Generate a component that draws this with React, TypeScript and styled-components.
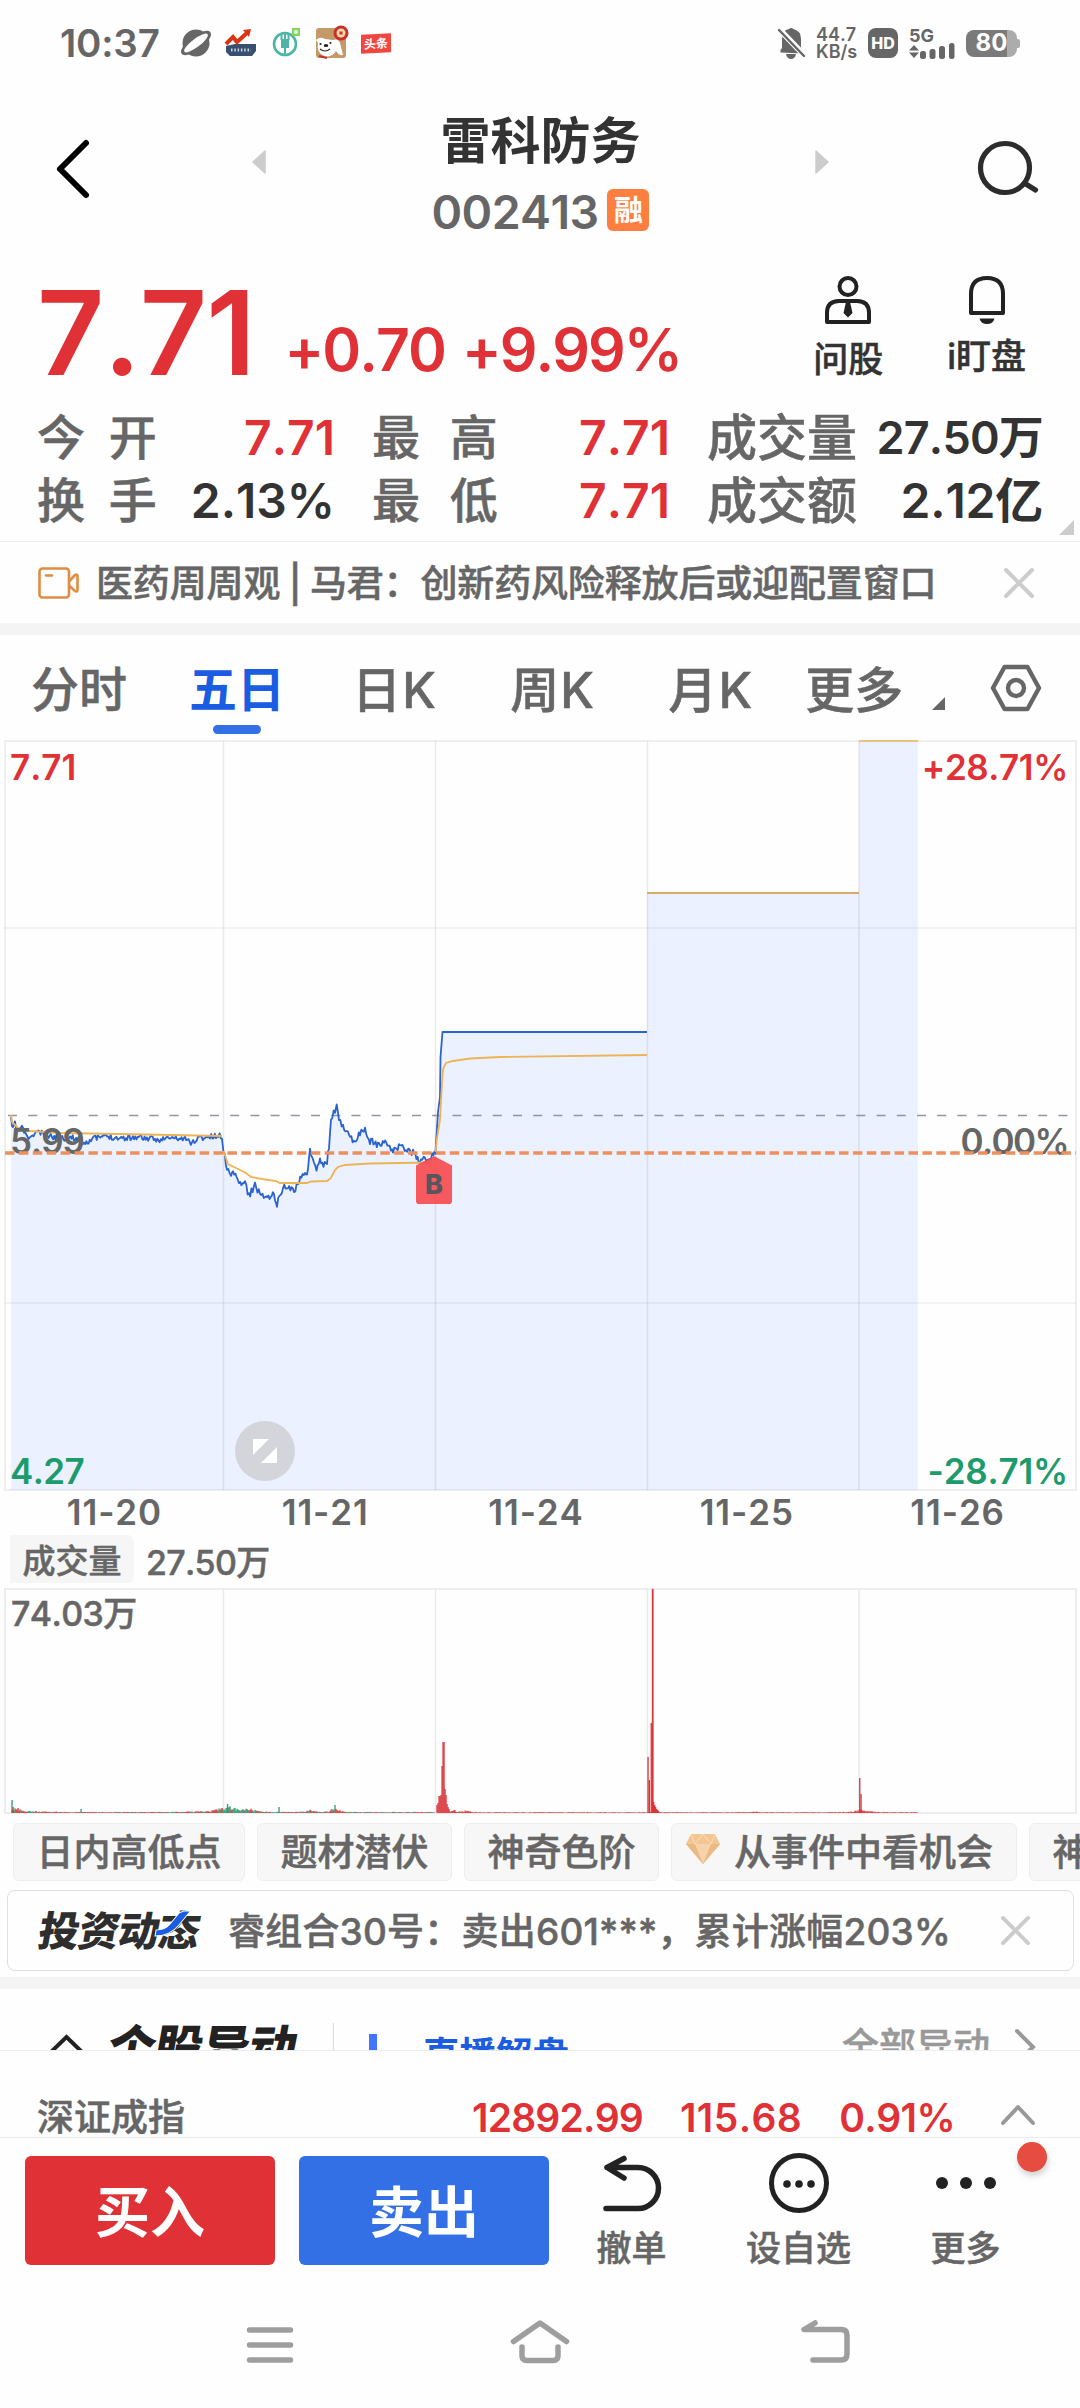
import React from "react";
import styled, { createGlobalStyle } from "styled-components";

const GlobalStyle = createGlobalStyle`
  * { box-sizing: border-box; }
  html, body { margin: 0; padding: 0; background: #fefefe; }
  body {
    font-family: "Inter", "Noto Sans CJK SC", sans-serif;
    font-kerning: none;
    color: #666;
  }
`;

const RED = "#e03136";
const GREEN = "#1d9b6c";
const BLUE = "#1b5de2";
const GREY = "#666666";
const INK = "#333333";

const Screen = styled.div`
  width: 1080px;
  height: 2408px;
  background: #fefefe;
  display: flex;
  flex-direction: column;
  overflow: hidden;
`;

const Svg = styled.svg`
  display: block;
  flex: none;
  overflow: visible;
`;

type LabelProps = { $size: number; $color?: string; $weight?: number; $spacing?: number; $shift?: number };
const Label = styled.span<LabelProps>`
  display: block;
  flex: none;
  white-space: nowrap;
  line-height: 1;
  font-size: ${(p) => p.$size}px;
  font-weight: ${(p) => p.$weight ?? 500};
  color: ${(p) => p.$color ?? GREY};
  -webkit-text-stroke: ${(p) => ((p.$weight ?? 500) === 500 ? 0.5 : 0)}px currentColor;
  letter-spacing: ${(p) => p.$spacing ?? 0}px;
  margin-top: ${(p) => (p.$shift ?? 0) * 2}px;
`;

/* ---------- status bar ---------- */

const StatusBar = styled.header`
  height: 86px;
  padding: 0 60px 0 60px;
  display: flex;
  align-items: center;
  justify-content: space-between;
`;
const StatusGroup = styled.div<{ $gap: number }>`
  display: flex;
  align-items: center;
  gap: ${(p) => p.$gap}px;
`;
const AppIcons = styled.div`
  display: flex;
  align-items: center;
  gap: 15px;
`;
const Speed = styled.div`
  display: flex;
  flex-direction: column;
  gap: 1px;
  width: 41px;
  font-size: 18px;
  line-height: 15.5px;
  font-weight: 600;
  white-space: nowrap;
`;
const Headline = styled.span`
  display: flex;
  align-items: center;
  justify-content: center;
  width: 30px;
  height: 19px;
  background: #ef4640;
  color: #fff;
  font-size: 12px;
  font-weight: 700;
  line-height: 1;
  transform: skewY(-3deg);
`;
const HdBadge = styled.div`
  width: 30px;
  height: 30px;
  border-radius: 8px;
  background: ${GREY};
  color: #fff;
  font-size: 16px;
  font-weight: 800;
  display: flex;
  align-items: center;
  justify-content: center;
`;
const Signal = styled.div`
  display: flex;
  flex-direction: column;
  width: 46px;
  height: 31px;
  font-size: 18px;
  font-weight: 700;
  line-height: 15px;
`;
const Battery = styled.div`
  width: 51px;
  height: 27px;
  border-radius: 8px;
  background: linear-gradient(90deg, #7a7a7a 80%, #acacac 80%);
  color: #fff;
  font-size: 24px;
  font-weight: 700;
  line-height: 1;
  display: flex;
  align-items: center;
  justify-content: center;
  margin-right: 3px;
  position: relative;
  &::after {
    content: "";
    position: absolute;
    right: -3px;
    top: 9px;
    width: 3px;
    height: 9px;
    border-radius: 0 2px 2px 0;
    background: #acacac;
  }
`;

function StatusRow() {
  return (
    <StatusBar>
      <StatusGroup $gap={21}>
        <Label $size={38.5} $weight={600} $spacing={-0.2}>10:37</Label>
        <AppIcons>
          <Svg width="30" height="28" viewBox="0 0 30 28">
            <circle cx="15" cy="14" r="13.5" fill={GREY} />
            <ellipse cx="15" cy="14" rx="18" ry="7" transform="rotate(-37 15 14)" fill={GREY} />
            <ellipse cx="15" cy="14" rx="14.5" ry="4.200" transform="rotate(-37 15 14)" fill="#fefefe" />
          </Svg>
          <Svg width="30" height="28" viewBox="0 0 30 28">
            <path d="M0 17 L9 15 L30 15 V22 L26 27 H4 L0 23Z" fill="#38506f" />
            <path d="M0 15 L7 8 L11 13 L22 3" fill="none" stroke="#db3413" strokeWidth="4" />
            <path d="M17 1 L25 0 L23 8Z" fill="#db3413" />
            <path d="M5 21 H25" stroke="#c9d2dd" strokeWidth="3" strokeDasharray="1.500 1.800" />
          </Svg>
          <Svg width="30" height="30" viewBox="0 0 30 30">
            <circle cx="14" cy="16" r="11" fill="none" stroke="#4cb5a5" strokeWidth="2.600" />
            <path d="M10.500 5 V12 M14 4 V12 M17.500 5 V12 M14 20 V27" fill="none" stroke="#4cb5a5" strokeWidth="2" />
            <rect x="10" y="11" width="8" height="9" fill="#4cb5a5" />
            <rect x="21" y="0" width="8" height="8" fill="#86cf61" />
            <circle cx="25" cy="4" r="2.300" fill="#d9f5c8" />
          </Svg>
          <Svg width="30" height="30" viewBox="0 0 30 30">
            <rect width="30" height="30" rx="3" fill="#c39a68" />
            <path d="M0 12 Q4 8 9 11 L17 12 Q22 10 24 15 L27 27 Q23 28 20 23 Q16 30 8 28 Q0 24 2 15Z" fill="#fff" />
            <circle cx="25" cy="5" r="7.500" fill="#c9302a" />
            <circle cx="25" cy="5" r="4.500" fill="#f3d9a8" />
            <rect x="23.500" y="3.500" width="3" height="3" fill="#c9302a" />
            <ellipse cx="10" cy="17.500" rx="2.300" ry="1.600" fill="#222" />
            <circle cx="4.500" cy="16" r="1.100" fill="#222" />
            <circle cx="14.500" cy="15" r="1.100" fill="#222" />
            <path d="M4 21 Q9 25 14 21" fill="none" stroke="#222" strokeWidth="1.200" />
            <path d="M3 28 L11 30" stroke="#c9302a" strokeWidth="2" />
          </Svg>
          <Headline>头条</Headline>
        </AppIcons>
      </StatusGroup>
      <StatusGroup $gap={11}>
        <Svg width="27" height="31" viewBox="0 0 27 31">
          <path d="M2.500 24.500 V22 L4 20 V11 Q4 2 11 1 Q13 -1 15.500 1 Q23 3 23 11 V20 L25 23 V25.500Z" fill={GREY} />
          <path d="M8 26 H18 Q17 31 13 31 Q9 31 8 26Z" fill={GREY} />
          <path d="M-1 -1 L28 29" stroke="#fefefe" strokeWidth="6" />
          <path d="M1 2 L26 28" stroke={GREY} strokeWidth="2.400" strokeLinecap="round" />
        </Svg>
        <Speed>
          <span>44.7</span>
          <span>KB/s</span>
        </Speed>
        <HdBadge>HD</HdBadge>
        <Signal>
          <span>5G</span>
          <Svg width="46" height="16" viewBox="0 0 46 16">
            <path d="M0 7.500 L5 2 L10 7.500Z M0 9.500 L5 15 L10 9.500Z" fill={GREY} />
            <g fill={GREY}>
              <rect x="11" y="8" width="6" height="8" rx="2.500" />
              <rect x="20.500" y="6" width="6" height="10" rx="2.500" />
              <rect x="30" y="3" width="6" height="13" rx="2.500" />
              <rect x="40" y="0" width="5.500" height="16" rx="2.500" />
            </g>
          </Svg>
        </Signal>
        <Battery>80</Battery>
      </StatusGroup>
    </StatusBar>
  );
}

/* ---------- title ---------- */

const TitleBar = styled.div`
  height: 164px;
  padding: 0 42px 0 57px;
  display: grid;
  grid-template-columns: 195px 1fr 209px;
  align-items: start;
`;
const TitleSide = styled.div<{ $end?: boolean }>`
  height: 120px;
  padding-top: 54px;
  display: flex;
  align-items: flex-start;
  justify-content: ${(p) => (p.$end ? "flex-end" : "flex-start")};
`;
const TitleMiddle = styled.div`
  display: flex;
  justify-content: space-between;
  align-items: flex-start;
`;
const TitleCentre = styled.div`
  padding-top: 30px;
  display: flex;
  flex-direction: column;
  align-items: center;
  gap: 23px;
`;
const CodeRow = styled.div`
  display: flex;
  align-items: center;
  gap: 9px;
`;
const MarginBadge = styled.span`
  width: 42px;
  height: 42px;
  border-radius: 6px;
  background: #ff7f41;
  color: #fff;
  font-size: 29px;
  font-weight: 700;
  line-height: 1;
  display: flex;
  align-items: center;
  justify-content: center;
  margin-top: -4px;
`;
const Pager = styled(Svg)`
  margin-top: 64px;
`;

function TitleRow() {
  return (
    <TitleBar>
      <TitleSide>
        <Svg width="32" height="58" viewBox="0 0 32 58">
          <path d="M29 3 L3 29 L29 55" fill="none" stroke="#000" strokeWidth="6" strokeLinecap="round" strokeLinejoin="round" />
        </Svg>
      </TitleSide>
      <TitleMiddle>
        <Pager width="14" height="24" viewBox="0 0 14 24">
          <path d="M13 1 V23 L1 12Z" fill="#ccc" stroke="#ccc" strokeWidth="1.500" strokeLinejoin="round" />
        </Pager>
        <TitleCentre>
          <Label $size={50} $color={INK} $weight={600}>雷科防务</Label>
          <CodeRow>
            <Label $size={46.5} $weight={600} $spacing={-0.6}>002413</Label>
            <MarginBadge>融</MarginBadge>
          </CodeRow>
        </TitleCentre>
        <Pager width="14" height="24" viewBox="0 0 14 24">
          <path d="M1 1 V23 L13 12Z" fill="#ccc" stroke="#ccc" strokeWidth="1.500" strokeLinejoin="round" />
        </Pager>
      </TitleMiddle>
      <TitleSide $end>
        <Svg width="60" height="56" viewBox="0 0 60 56">
          <circle cx="27" cy="28" r="24.500" fill="none" stroke="#2c2c2c" strokeWidth="5.200" />
          <path d="M47 43.500 L57.500 50" stroke="#2c2c2c" strokeWidth="5.200" strokeLinecap="round" />
        </Svg>
      </TitleSide>
    </TitleBar>
  );
}

/* ---------- quote ---------- */

const Quote = styled.section`
  height: 156px;
  padding: 0 54px 0 37px;
  display: flex;
  justify-content: space-between;
`;
const PriceRow = styled.div`
  display: flex;
  align-items: flex-start;
  padding-top: 24px;
`;
const Change = styled.div`
  display: flex;
  gap: 17px;
  margin: 46px 0 0 30px;
`;
const Actions = styled.div`
  display: flex;
  gap: 64px;
  padding-top: 26px;
`;
const Action = styled.div<{ $gap: number }>`
  display: flex;
  flex-direction: column;
  align-items: center;
  gap: ${(p) => p.$gap}px;
`;

function QuoteRow() {
  return (
    <Quote>
      <PriceRow>
        <Label $size={117} $color={RED} $weight={600} $spacing={-1}>7.71</Label>
        <Change>
          <Label $size={59} $color={RED} $weight={600} $spacing={-2}>+0.70</Label>
          <Label $size={59} $color={RED} $weight={600} $spacing={-2}>+9.99%</Label>
        </Change>
      </PriceRow>
      <Actions>
        <Action $gap={18}>
          <Svg width="46" height="48" viewBox="0 0 46 48">
            <circle cx="23" cy="10.500" r="8.500" fill="none" stroke="#222" strokeWidth="4" />
            <path d="M2 46 V37 Q2 25 14 25 H32 Q44 25 44 37 V46Z" fill="none" stroke="#222" strokeWidth="4" strokeLinejoin="round" />
            <path d="M21 26 H25 L27.500 37 L23 41.500 L18.500 37Z" fill="#222" />
          </Svg>
          <Label $size={35} $color={INK}>问股</Label>
        </Action>
        <Action $gap={15}>
          <Svg width="36" height="48" viewBox="0 0 36 48">
            <path d="M2 37 V18 Q2 2 18 2 Q34 2 34 18 V37Z" fill="none" stroke="#222" strokeWidth="4" strokeLinejoin="round" />
            <path d="M10.500 42.500 H25.500 Q24 48 18 48 Q12 48 10.500 42.500Z" fill="#222" />
          </Svg>
          <Label $size={35} $color={INK}>i盯盘</Label>
        </Action>
      </Actions>
    </Quote>
  );
}

/* ---------- figures ---------- */

const Figures = styled.section`
  height: 135px;
  padding: 0 37px 9px 37px;
  display: grid;
  grid-template-columns: 298px 298px 1fr;
  column-gap: 37px;
  grid-auto-rows: 63px;
  position: relative;
`;
const Figure = styled.div`
  display: flex;
  align-items: center;
  justify-content: space-between;
  height: 63px;
`;
const Corner = styled(Svg)`
  position: absolute;
  right: 6px;
  bottom: 6px;
`;

type FigureData = { name: string; value: string; color: string; size: number; spacing: number; gap: number };
const FIGURES: FigureData[] = [
  { name: "今 开", value: "7.71", color: RED, size: 48, spacing: 0, gap: 11 },
  { name: "最 高", value: "7.71", color: RED, size: 48, spacing: 0, gap: 17 },
  { name: "成交量", value: "27.50万", color: INK, size: 45, spacing: -0.8, gap: 0 },
  { name: "换 手", value: "2.13%", color: INK, size: 48, spacing: 0, gap: 11 },
  { name: "最 低", value: "7.71", color: RED, size: 48, spacing: 0, gap: 17 },
  { name: "成交额", value: "2.12亿", color: INK, size: 48, spacing: -0.2, gap: 0 },
];
const FigureName = styled(Label)<{ $gap: number }>`
  word-spacing: ${(p) => p.$gap}px;
`;

function FigureGrid() {
  return (
    <Figures>
      {FIGURES.map((f, i) => (
        <Figure key={i}>
          <FigureName $size={f.gap ? 48 : 50} $gap={f.gap}>{f.name}</FigureName>
          <Label $size={f.size} $color={f.color} $weight={600} $spacing={f.spacing}>{f.value}</Label>
        </Figure>
      ))}
      <Corner width="15" height="15" viewBox="0 0 15 15">
        <path d="M15 0 V15 H0Z" fill="#ccc" />
      </Corner>
    </Figures>
  );
}

/* ---------- banner ---------- */

const Banner = styled.div`
  height: 82px;
  border-top: 1px solid #ececec;
  padding: 0 46px 0 38px;
  display: flex;
  align-items: center;
`;
const BannerText = styled(Label)`
  margin-left: 17px;
  flex: 1;
  word-spacing: -1.2px;
`;
const Band = styled.div`
  height: 12px;
  flex: none;
  background: #f4f4f4;
`;

function Cross({ size }: { size: number }) {
  return (
    <Svg width={size} height={size} viewBox="0 0 30 30">
      <path d="M2 2 L28 28 M28 2 L2 28" stroke="#ccc" strokeWidth="4" strokeLinecap="round" />
    </Svg>
  );
}

/* ---------- tabs ---------- */

const Tabs = styled.nav`
  height: 105px;
  padding: 0 39px 0 31px;
  display: flex;
`;
const Tab = styled.div<{ $left: number; $active?: boolean }>`
  margin-left: ${(p) => p.$left}px;
  padding-top: 31px;
  display: flex;
  flex-direction: column;
  align-items: center;
  &::after {
    content: "";
    display: ${(p) => (p.$active ? "block" : "none")};
    width: 48px;
    height: 9px;
    margin-top: 11px;
    border-radius: 5px;
    background: #3370e6;
  }
`;
const TabMark = styled(Svg)`
  margin: 62px 0 0 29px;
`;
const Hexagon = styled(Svg)`
  margin: 30px 0 0 auto;
`;

function TabRow() {
  return (
    <Tabs>
      <Tab $left={0}><Label $size={48}>分时</Label></Tab>
      <Tab $left={62} $active><Label $size={48} $color={BLUE} $weight={700}>五日</Label></Tab>
      <Tab $left={67}><Label $size={49} $spacing={1.2}>日K</Label></Tab>
      <Tab $left={73}><Label $size={49} $spacing={1.2}>周K</Label></Tab>
      <Tab $left={73}><Label $size={49} $spacing={1.2}>月K</Label></Tab>
      <Tab $left={52}><Label $size={49}>更多</Label></Tab>
      <TabMark width="13" height="13" viewBox="0 0 13 13">
        <path d="M13 0 V13 H0Z" fill={GREY} />
      </TabMark>
      <Hexagon width="50" height="46" viewBox="0 0 50 46">
        <path d="M13.500 2 H36.500 L48 23 L36.500 44 H13.500 L2 23Z" fill="none" stroke={GREY} strokeWidth="4.400" strokeLinejoin="round" />
        <circle cx="25" cy="23" r="8" fill="none" stroke={GREY} strokeWidth="4.400" />
      </Hexagon>
    </Tabs>
  );
}

/* ---------- charts ---------- */

const DAY_LINES = [223.5, 435.5, 647.5, 859];

type Pt = [number, number];

function random(seed: number) {
  let s = seed;
  return () => {
    s = (s * 16807) % 2147483647;
    return s / 2147483647;
  };
}

function jagged(points: Pt[], noise: number, seed: number): Pt[] {
  const rnd = random(seed);
  const out: Pt[] = [points[0]];
  for (let i = 1; i < points.length; i++) {
    const [x0, y0] = points[i - 1];
    const [x1, y1] = points[i];
    const steps = Math.max(1, Math.round((x1 - x0) / 1.2));
    for (let k = 1; k <= steps; k++) {
      const t = k / steps;
      out.push([x0 + (x1 - x0) * t, y0 + (y1 - y0) * t + (rnd() - 0.5) * noise]);
    }
  }
  return out;
}
const toPath = (pts: Pt[]) => "M" + pts.map(([x, y]) => x.toFixed(1) + " " + y.toFixed(1)).join(" L");

const DAY1 = jagged(
  [[11, 377], [12, 389], [15, 384], [18, 390], [22, 387], [25, 394], [31, 399], [36, 391], [45, 395], [60, 398], [75, 398], [83, 403], [92, 399], [106, 396], [120, 398], [140, 397], [155, 400], [170, 398], [185, 399], [192, 403], [198, 398], [222, 396]],
  6, 11);
const DAY2 = jagged(
  [[223.5, 412], [227, 427], [231, 437], [233, 430], [239, 446], [245, 443], [249, 456], [255, 444], [260, 455], [265, 458], [274, 454], [277, 464], [283, 447], [288, 445], [294, 453], [299, 440], [305, 432], [307, 437], [310, 412], [314, 423], [316.5, 431], [320, 422], [327, 425], [329, 405], [331, 378], [335, 370], [336.7, 367], [339, 377], [343, 388], [349, 395], [355, 402], [360, 393], [365, 390], [370, 401], [379, 405], [384, 401], [392, 412], [400, 406], [406, 409], [413, 413], [421, 422], [425, 418], [431, 418], [435.5, 411]],
  7, 29);
const DAY3: Pt[] = [[435.5, 411], [438, 372], [440, 357], [440.5, 317], [442.5, 292], [647, 292]];
const PRICE = [...DAY1, ...DAY2, ...DAY3];

const AVERAGES = [
  "M11 375 L12 382 L19 389 L30 391 L60 393 L120 394 L222 396",
  "M223.500 411 L228 424 L236 428 L246 433 L251 437 L262 439 L276 441 L280 443 L307 443 L311 441.500 L327 441 L331 438 L335 430 L338 427 L345 425 L370 423.500 L430 422.500",
  "M435.500 412 L437 398 L440 380 L441.500 352 L443 329 L446 323 L453 321 L470 318.500 L500 317 L647 315",
];

const ChartBox = styled.section`
  position: relative;
  height: 752px;
`;
const ChartLabels = styled.div`
  position: absolute;
  inset: 10px 12px 3px 10px;
  display: grid;
  grid-template-columns: auto auto;
  justify-content: space-between;
  align-content: space-between;
`;
const EndLabel = styled(Label)`
  justify-self: end;
`;
const CostLine = styled(Svg)`
  position: absolute;
  left: 0;
  top: 411px;
`;
const BuyMark = styled.div`
  position: absolute;
  left: 416px;
  top: 416px;
  width: 36px;
  height: 48px;
  padding-top: 9px;
  clip-path: polygon(50% 0, 100% 20%, 100% 96%, 96% 100%, 4% 100%, 0 96%, 0 20%);
  background: rgba(247, 72, 76, 0.9);
  display: flex;
  align-items: center;
  justify-content: center;
  font-size: 27px;
  font-weight: 800;
  color: #565660;
`;
const Expand = styled(Svg)`
  position: absolute;
  left: 235px;
  top: 681px;
`;

function PriceChart() {
  return (
    <ChartBox>
      <Svg width="1080" height="752" viewBox="0 0 1080 752">
        <path d={toPath(PRICE) + " V153 H859 V2 H918 V750 H11Z"} fill="#ebf1ff" />
        <g stroke="#000" strokeOpacity="0.08" strokeWidth="1.500">
          <path d="M5 188 H1076 M5 563 H1076" strokeOpacity="0.06" />
          {DAY_LINES.map((x) => <path key={x} d={`M${x} 1 V750`} />)}
        </g>
        <path d="M8 375.500 H1076" stroke="#9495a0" strokeWidth="1.300" strokeDasharray="9 11.200" />
        <path d={toPath(PRICE)} fill="none" stroke="#2a63cf" strokeWidth="1.800" strokeLinejoin="round" />
        {AVERAGES.map((d) => <path key={d} d={d} fill="none" stroke="#edb354" strokeWidth="1.800" />)}
        <path d="M647 153 H859" stroke="#d8ab67" strokeWidth="2" />
        <rect x="5" y="1" width="1071" height="749" fill="none" stroke="#000" strokeOpacity="0.06" strokeWidth="2" />
        <path d="M859 1 H918" stroke="#e8c27e" strokeWidth="2" />
      </Svg>
      <ChartLabels>
        <Label $size={35} $color={RED} $weight={600}>7.71</Label>
        <EndLabel $size={35} $color={RED} $weight={600} $spacing={-0.4}>+28.71%</EndLabel>
        <Label $size={35} $weight={600} $shift={22} $spacing={-1}>5.99</Label>
        <EndLabel $size={35} $weight={600} $shift={22} $spacing={-1.6}>0.00%</EndLabel>
        <Label $size={35} $color={GREEN} $weight={600} $spacing={-0.6}>4.27</Label>
        <EndLabel $size={35} $color={GREEN} $weight={600} $spacing={-0.2}>-28.71%</EndLabel>
      </ChartLabels>
      <CostLine width="1080" height="4" viewBox="0 0 1080 4">
        <path d="M5 2 H1076" stroke="#ee8f5e" strokeWidth="3.400" strokeDasharray="9.500 4.400" />
      </CostLine>
      <BuyMark>B</BuyMark>
      <Expand width="60" height="60" viewBox="0 0 60 60">
        <circle cx="30" cy="30" r="30" fill="#d4d5da" />
        <path d="M18 18 H34 L18 34Z M42 26 V42 H26Z" fill="#fff" />
      </Expand>
    </ChartBox>
  );
}

const Dates = styled.div`
  height: 41px;
  padding: 0 17px 0 9px;
  display: grid;
  grid-template-columns: repeat(5, 1fr);
  justify-items: center;
  align-items: center;
`;
const VolumeHead = styled.div`
  height: 55px;
  padding: 2px 0 6px 10px;
  display: flex;
  align-items: center;
  gap: 12px;
`;
const VolumeTag = styled.div`
  width: 124px;
  height: 48px;
  border-radius: 0 6px 6px 0;
  background: #f6f6f6;
  display: flex;
  align-items: center;
  justify-content: center;
`;
const VolumeBox = styled.section`
  position: relative;
  height: 226px;
`;
const VolumeMax = styled.div`
  position: absolute;
  left: 11px;
  top: 9px;
`;

type Bar = { x: number; h: number; up: boolean };

function smallBars(): Bar[] {
  const rnd = random(77);
  const bars: Bar[] = [];
  const bump = (x: number, at: number, h: number, w: number) => h * Math.exp(-Math.abs(x - at) / w);
  for (let x = 12; x < 435; x += 1) {
    const level = 1 + bump(x, 12, 6, 12) + bump(x, 228, 6, 14) + bump(x, 250, 2.5, 6) + bump(x, 310, 2, 5) + bump(x, 335, 8, 3);
    bars.push({ x, h: level * (0.4 + rnd() * 0.7), up: rnd() > (x > 223 && x < 245 ? 0.7 : 0.35) });
  }
  for (let x = 450; x < 918; x += 1) {
    const level = 0.8 + bump(x, 450, 3, 10) + bump(x, 467, 3, 2) + bump(x, 754, 2, 2) + bump(x, 861, 3, 8);
    bars.push({ x, h: level * (0.3 + rnd() * 0.8), up: true });
  }
  return bars;
}
const SPIKES: Bar[] = [
  { x: 12, h: 13, up: false }, { x: 13, h: 6, up: true }, { x: 227.5, h: 9, up: false }, { x: 279, h: 6, up: false }, { x: 81, h: 4, up: false },
  { x: 437, h: 8, up: true }, { x: 438, h: 10, up: true }, { x: 439, h: 17, up: true }, { x: 440, h: 17, up: true }, { x: 441, h: 18, up: true },
  { x: 442, h: 47, up: true }, { x: 443, h: 71, up: true }, { x: 444, h: 71, up: true }, { x: 445, h: 24, up: true }, { x: 446, h: 18, up: true },
  { x: 447, h: 9, up: true }, { x: 448, h: 6, up: true }, { x: 449, h: 4, up: true },
  { x: 648, h: 56, up: true }, { x: 649.3, h: 33, up: true }, { x: 651.2, h: 90, up: true }, { x: 652.4, h: 224, up: true }, { x: 653.6, h: 11, up: true },
  { x: 654.6, h: 8, up: true }, { x: 655.6, h: 6, up: true }, { x: 656.6, h: 4, up: true }, { x: 657.6, h: 3, up: true }, { x: 658.6, h: 2, up: true },
  { x: 859.7, h: 35, up: true }, { x: 861, h: 19, up: true },
];
const BARS = [...smallBars(), ...SPIKES];

function VolumeChart() {
  return (
    <VolumeBox>
      <Svg width="1080" height="226" viewBox="0 0 1080 226">
        <rect x="5" y="1" width="1071" height="224" fill="none" stroke="#ededee" strokeWidth="2" />
        {DAY_LINES.map((x) => <path key={x} d={`M${x} 1 V225`} stroke="#e9e9ea" strokeWidth="1.500" />)}
        {BARS.map((b, i) => (
          <rect key={i} x={b.x - 0.6} y={225 - b.h} width={b.h > 200 ? 1.8 : 1.3} height={b.h} fill={b.up ? "#d93438" : "#2b9c73"} />
        ))}
      </Svg>
      <VolumeMax><Label $size={34} $spacing={-0.6}>74.03万</Label></VolumeMax>
    </VolumeBox>
  );
}

/* ---------- chips and news ---------- */

const Chips = styled.div`
  height: 76px;
  padding: 9px 0 0 13px;
  display: flex;
  gap: 12px;
  overflow: hidden;
`;
const Chip = styled.div<{ $width: number; $icon?: boolean }>`
  flex: none;
  width: ${(p) => p.$width}px;
  height: 58px;
  border: 1px solid #eeeeee;
  border-radius: 6px;
  background: #f7f7f7;
  display: flex;
  align-items: center;
  justify-content: ${(p) => (p.$icon ? "flex-start" : "center")};
  padding-left: ${(p) => (p.$icon ? 14 : 0)}px;
  gap: 14px;
`;
const Gem = styled(Svg)`
  margin-top: -6px;
`;
const Card = styled.div`
  margin: 0 6px 6px 7px;
  height: 81px;
  flex: none;
  border: 1px solid #dfdfdf;
  border-radius: 8px;
  padding: 0 43px 0 31px;
  display: flex;
  align-items: center;
`;
const NewsLogo = styled.div`
  position: relative;
  width: 162px;
  padding-top: 2px;
  font-size: 41px;
  font-weight: 900;
  line-height: 1;
  color: #2e2e2e;
  white-space: nowrap;
  letter-spacing: -1px;
  transform: skewX(-10deg);
`;
const Swoosh = styled(Svg)`
  position: absolute;
  left: 117px;
  top: 2px;
`;
const NewsText = styled(Label)`
  margin-left: 27px;
  flex: 1;
`;

/* ---------- clipped section ---------- */

const Section = styled.section`
  height: 61px;
  flex: none;
  padding: 34px 45px 0 50px;
  overflow: hidden;
  display: flex;
  align-items: flex-start;
`;
const Fold = styled(Svg)`
  margin-top: 12px;
`;
const SectionTitle = styled.div`
  margin: 1px 0 0 25px;
  width: 192px;
  font-size: 48px;
  font-weight: 900;
  line-height: 1;
  letter-spacing: -1px;
  color: #222;
  white-space: nowrap;
  transform: skewX(-10deg);
`;
const Rule = styled.div`
  width: 1px;
  height: 60px;
  margin-left: 33px;
  background: #ddd;
`;
const BlueBar = styled.div`
  width: 8px;
  height: 40px;
  margin: 11px 0 0 35px;
  background: #3f76fb;
`;
const LiveLink = styled(Label)`
  margin: 14px 0 0 46px;
`;
const AllLink = styled(Label)`
  margin: 5px 25px 0 auto;
`;
const Next = styled(Svg)`
  margin-top: 6px;
`;

/* ---------- index strip ---------- */

const IndexStrip = styled.div`
  height: 87px;
  flex: none;
  padding: 48px 45px 0 37px;
  border-top: 1px solid #ececec;
  display: flex;
  align-items: flex-start;
`;
const IndexValues = styled.div`
  margin: -1px 0 0 auto;
  display: flex;
  gap: 37px;
`;
const Up = styled(Svg)`
  margin: 6px 0 0 46px;
`;

/* ---------- trade bar ---------- */

const TradeBar = styled.div`
  height: 133px;
  flex: none;
  padding: 18px 0 0 25px;
  border-top: 1px solid #ececec;
  display: flex;
  align-items: flex-start;
  position: relative;
`;
const Trade = styled.button<{ $bg: string }>`
  width: 250px;
  height: 109px;
  margin: 0 24px 0 0;
  border: 0;
  border-radius: 6px;
  background: ${(p) => p.$bg};
  color: #fff;
  font-family: inherit;
  font-size: 55px;
  font-weight: 700;
  line-height: 1;
  padding: 3px 0 0;
`;
const Tools = styled.div`
  display: flex;
  margin: -3px 0 0 -25px;
`;
const Tool = styled.div`
  width: 167px;
  display: flex;
  flex-direction: column;
  align-items: center;
  gap: 18px;
`;
const Dot = styled.div`
  position: absolute;
  left: 1017px;
  top: 4px;
  width: 30px;
  height: 30px;
  border-radius: 50%;
  background: #e64d40;
  box-shadow: 1px 4px 6px rgba(0, 0, 0, 0.18);
`;

const SystemNav = styled.footer`
  flex: 1;
  padding: 50px 0 0 247px;
  display: grid;
  grid-template-columns: 264px 290px auto;
  justify-content: start;
  align-items: start;
`;

export default function App() {
  return (
    <>
      <GlobalStyle />
      <Screen>
        <StatusRow />
        <TitleRow />
        <QuoteRow />
        <FigureGrid />
        <Banner>
          <Svg width="41" height="32" viewBox="0 0 41 32">
            <rect x="1.500" y="1.500" width="29.500" height="29" rx="3" fill="none" stroke="#df8d42" strokeWidth="2.600" />
            <path d="M8 8.500 H14" stroke="#df8d42" strokeWidth="2.600" strokeLinecap="round" />
            <path d="M31.500 14 L37 8 Q39.500 7 39.500 9 V23 Q39.500 25.500 37 24 L31.500 19" fill="none" stroke="#df8d42" strokeWidth="2.600" strokeLinejoin="round" />
          </Svg>
          <BannerText $size={37} $shift={1} $spacing={-0.15}>医药周周观 | 马君：创新药风险释放后或迎配置窗口</BannerText>
          <Cross size={30} />
        </Banner>
        <Band />
        <TabRow />
        <PriceChart />
        <Dates>
          {["11-20", "11-21", "11-24", "11-25", "11-26"].map((d) => (
            <Label key={d} $size={35} $weight={600} $spacing={0.9}>{d}</Label>
          ))}
        </Dates>
        <VolumeHead>
          <VolumeTag><Label $size={33} $shift={3}>成交量</Label></VolumeTag>
          <Label $size={34} $shift={4} $spacing={-0.7}>27.50万</Label>
        </VolumeHead>
        <VolumeChart />
        <Chips>
          <Chip $width={232}><Label $size={37} $shift={0.5}>日内高低点</Label></Chip>
          <Chip $width={195}><Label $size={37} $shift={0.5}>题材潜伏</Label></Chip>
          <Chip $width={195}><Label $size={37} $shift={0.5}>神奇色阶</Label></Chip>
          <Chip $width={346} $icon>
            <Gem width="34" height="30" viewBox="0 0 34 30">
              <path d="M5 0 H29 L34 10 L17 30 L0 10Z" fill="#f3c592" />
              <path d="M0 10 H34 L17 30Z" fill="#ecb983" />
              <path d="M9 10 H25 L17 30Z" fill="#f6d3ab" />
              <path d="M5 0 L9 10 L17 0 L25 10 L29 0" fill="none" stroke="#fadfc0" strokeWidth="1" />
            </Gem>
            <Label $size={37} $shift={0.5}>从事件中看机会</Label>
          </Chip>
          <Chip $width={195}><Label $size={37} $shift={0.5}>神奇九转</Label></Chip>
        </Chips>
        <Card>
          <NewsLogo>
            投资动态
            <Swoosh width="34" height="26" viewBox="0 0 34 26">
              <path d="M0 25 V19 Q9 19 13 13 L20 2 L24 0 H31 L22 14 Q15 25 0 25Z" fill={BLUE} stroke="#fefefe" strokeWidth="1" />
            </Swoosh>
          </NewsLogo>
          <NewsText $size={37} $spacing={0.2} $shift={1}>睿组合30号：卖出601***，累计涨幅203%</NewsText>
          <Cross size={29} />
        </Card>
        <Band />
        <Section>
          <Fold width="33" height="20" viewBox="0 0 33 20">
            <path d="M1 17 L16.500 2 L32 17" fill="none" stroke="#222" strokeWidth="4" />
          </Fold>
          <SectionTitle>个股异动</SectionTitle>
          <Rule />
          <BlueBar />
          <LiveLink $size={36.5} $color={BLUE} $weight={700}>直播解盘</LiveLink>
          <AllLink $size={37} $color="#999">全部异动</AllLink>
          <Next width="20" height="36" viewBox="0 0 20 36">
            <path d="M2 2 L18 18 L2 34" fill="none" stroke="#999" strokeWidth="4" strokeLinecap="round" />
          </Next>
        </Section>
        <IndexStrip>
          <Label $size={37}>深证成指</Label>
          <IndexValues>
            <Label $size={39} $color={RED} $weight={600} $spacing={-0.8}>12892.99</Label>
            <Label $size={39} $color={RED} $weight={600} $spacing={0.4}>115.68</Label>
            <Label $size={39} $color={RED} $weight={600} $spacing={-0.6}>0.91%</Label>
          </IndexValues>
          <Up width="34" height="20" viewBox="0 0 34 20">
            <path d="M2 18 L17 2 L32 18" fill="none" stroke="#999" strokeWidth="4" strokeLinecap="round" strokeLinejoin="round" />
          </Up>
        </IndexStrip>
        <TradeBar>
          <Trade $bg={RED}>买入</Trade>
          <Trade $bg="#3370e6">卖出</Trade>
          <Tools>
            <Tool>
              <Svg width="60" height="60" viewBox="0 0 60 60">
                <path d="M22 5.500 L5 14.500 L22 25 M5 14.500 H36 A20.500 20.500 0 0 1 36 55.500 H4" fill="none" stroke="#222" strokeWidth="5.500" strokeLinecap="round" strokeLinejoin="round" />
              </Svg>
              <Label $size={35}>撤单</Label>
            </Tool>
            <Tool>
              <Svg width="60" height="60" viewBox="0 0 60 60">
                <circle cx="30" cy="30" r="27.500" fill="none" stroke="#222" strokeWidth="5" />
                <g fill="#222">
                  <circle cx="18" cy="31" r="3.800" />
                  <circle cx="30" cy="31" r="3.800" />
                  <circle cx="42" cy="31" r="3.800" />
                </g>
              </Svg>
              <Label $size={35}>设自选</Label>
            </Tool>
            <Tool>
              <Svg width="60" height="60" viewBox="0 0 60 60">
                <g fill="#222">
                  <circle cx="6" cy="30" r="6" />
                  <circle cx="30" cy="30" r="6" />
                  <circle cx="54" cy="30" r="6" />
                </g>
              </Svg>
              <Label $size={35}>更多</Label>
            </Tool>
          </Tools>
          <Dot />
        </TradeBar>
        <SystemNav>
          <Svg width="46" height="44" viewBox="0 0 46 44">
            <path d="M2.500 10 H43.500 M2.500 25 H43.500 M2.500 40 H43.500" stroke="#9e9e9e" strokeWidth="5.500" strokeLinecap="round" />
          </Svg>
          <Svg width="58" height="44" viewBox="0 0 58 44">
            <path d="M2.500 21.500 L29 3 L55.500 21.500" fill="none" stroke="#9e9e9e" strokeWidth="5.500" strokeLinecap="round" strokeLinejoin="round" />
            <path d="M11 27 V36 Q11 40.500 16 40.500 H42 Q47 40.500 47 36 V27" fill="none" stroke="#9e9e9e" strokeWidth="5.500" strokeLinecap="round" />
          </Svg>
          <Svg width="49" height="44" viewBox="0 0 49 44">
            <path d="M14 3 L3 9.500 H40 Q46 9.500 46 15 V34 Q46 40 40 40 H12" fill="none" stroke="#9e9e9e" strokeWidth="5.500" strokeLinecap="round" strokeLinejoin="round" />
          </Svg>
        </SystemNav>
      </Screen>
    </>
  );
}
